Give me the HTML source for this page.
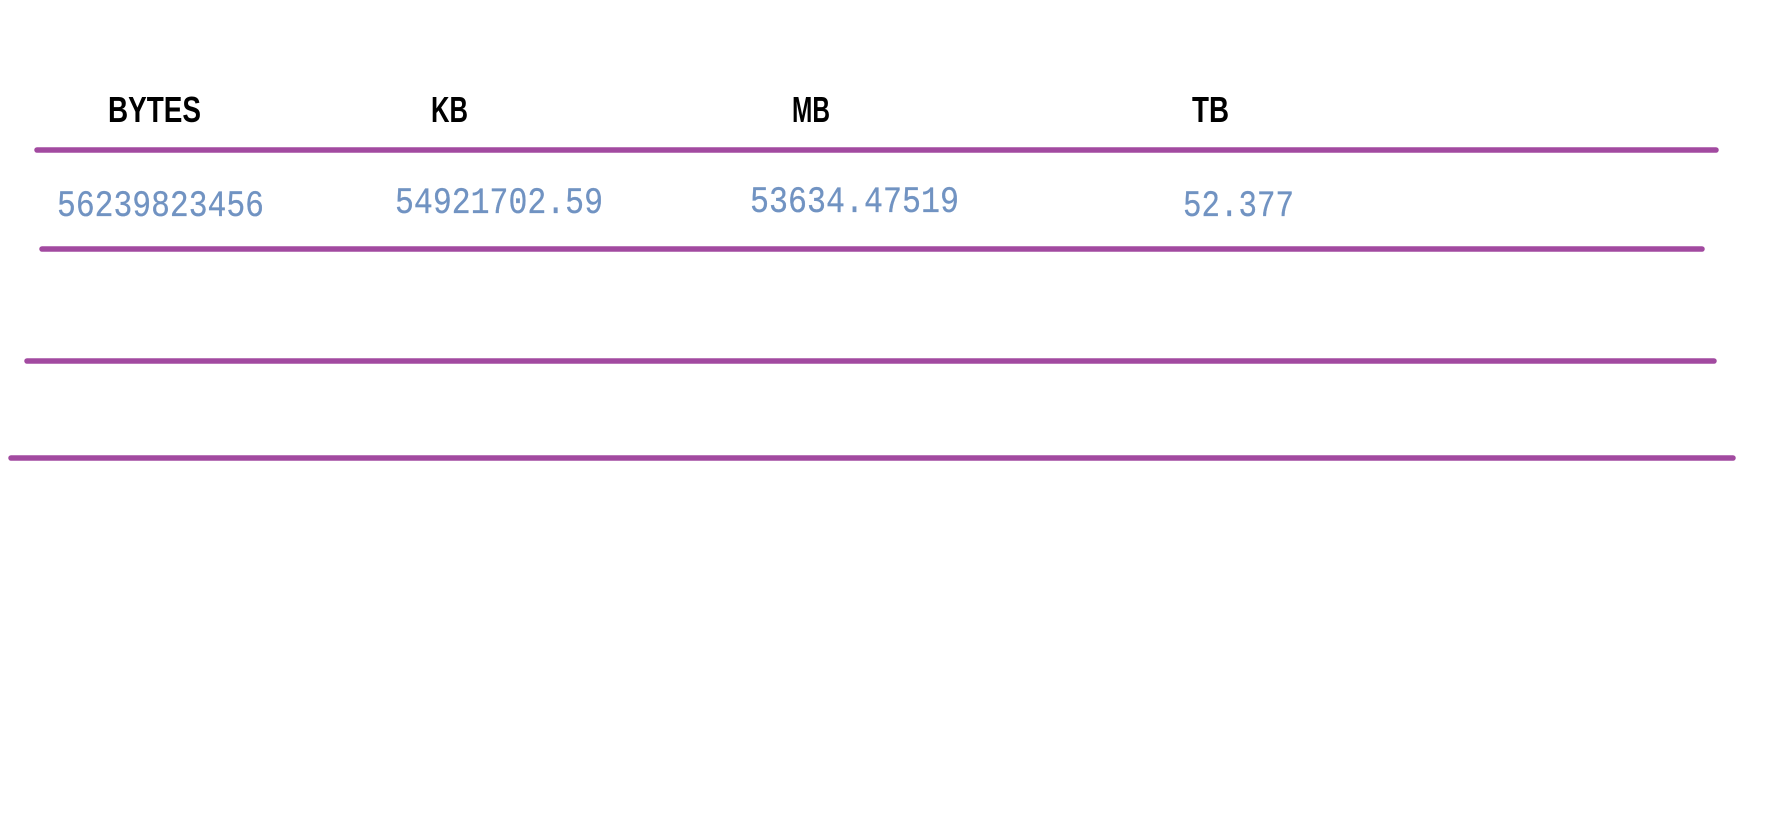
<!DOCTYPE html>
<html><head><meta charset="utf-8"><style>
html,body{margin:0;padding:0;background:#fff;width:1777px;height:831px;overflow:hidden}
svg{display:block}
.h{font-family:"Liberation Sans",sans-serif;font-size:36px;font-weight:bold;fill:#000}
.n{font-family:"Liberation Mono",monospace;font-size:37px;fill:#7193c2;stroke:#7193c2;stroke-width:0.3}
</style></head><body>
<svg width="1777" height="831" viewBox="0 0 1777 831" xmlns="http://www.w3.org/2000/svg">
<text class="h" x="108" y="122" textLength="93" lengthAdjust="spacingAndGlyphs">BYTES</text>
<text class="h" x="431" y="122" textLength="37" lengthAdjust="spacingAndGlyphs">KB</text>
<text class="h" x="792" y="122" textLength="38" lengthAdjust="spacingAndGlyphs">MB</text>
<text class="h" x="1192" y="122" textLength="37" lengthAdjust="spacingAndGlyphs">TB</text>
<g stroke="#a24aa0" stroke-width="5.5" stroke-linecap="round">
<line x1="37" y1="150" x2="1716" y2="150"/>
<line x1="42" y1="249" x2="1702" y2="249"/>
<line x1="27" y1="361" x2="1714" y2="361"/>
<line x1="11" y1="458" x2="1733" y2="458"/>
</g>
<text class="n" x="57" y="216" textLength="207" lengthAdjust="spacingAndGlyphs">56239823456</text>
<text class="n" x="395" y="213" textLength="208" lengthAdjust="spacingAndGlyphs">54921702.59</text>
<text class="n" x="750" y="212" textLength="209" lengthAdjust="spacingAndGlyphs">53634.47519</text>
<text class="n" x="1183" y="216" textLength="111" lengthAdjust="spacingAndGlyphs">52.377</text>
</svg>
</body></html>
